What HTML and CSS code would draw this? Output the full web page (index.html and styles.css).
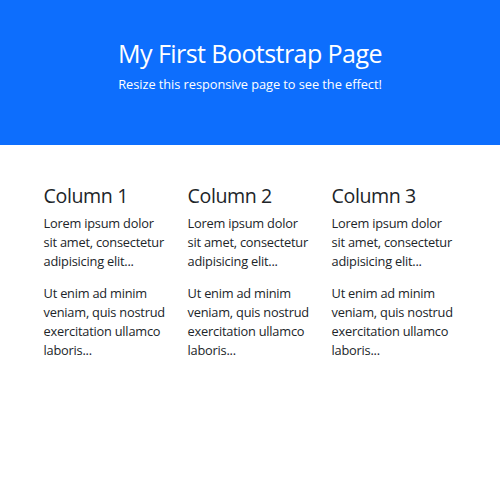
FILE: index.html
```html
<!DOCTYPE html>
<html lang="en">
<head>
<meta charset="utf-8">
<title>Bootstrap Example</title>
<link rel="stylesheet" href="styles.css">
</head>
<body>
<div class="hero">
  <h1 class="hero-title">My First Bootstrap Page</h1>
  <p class="hero-sub">Resize this responsive page to see the effect!</p>
</div>
<div class="container">
  <div class="row">
    <div class="col">
      <h3 class="col-title">Column 1</h3>
      <p class="col-text">Lorem ipsum dolor sit amet, consectetur adipisicing elit...</p>
      <p class="col-text">Ut enim ad minim veniam, quis nostrud exercitation ullamco laboris...</p>
    </div>
    <div class="col">
      <h3 class="col-title">Column 2</h3>
      <p class="col-text">Lorem ipsum dolor sit amet, consectetur adipisicing elit...</p>
      <p class="col-text">Ut enim ad minim veniam, quis nostrud exercitation ullamco laboris...</p>
    </div>
    <div class="col">
      <h3 class="col-title">Column 3</h3>
      <p class="col-text">Lorem ipsum dolor sit amet, consectetur adipisicing elit...</p>
      <p class="col-text">Ut enim ad minim veniam, quis nostrud exercitation ullamco laboris...</p>
    </div>
  </div>
</div>
</body>
</html>
```
FILE: styles.css
```css
* { box-sizing: border-box; }
html, body { margin: 0; padding: 0; }
body {
  font-family: "Segoe UI", "Open Sans", sans-serif;
  font-size: 12.8px;
  line-height: 1.5;
  color: #212529;
  background: #fff;
  letter-spacing: -0.22px;
}
.hero {
  background: #0d6efd;
  color: #fff;
  text-align: center;
  padding: 38.4px;
}
.hero-title {
  margin: 0 0 6.4px;
  font-size: 25.1px;
  font-weight: 400;
  line-height: 1.2;
  letter-spacing: -0.6px;
}
.hero-sub {
  margin: 0 0 12.8px;
  letter-spacing: -0.05px;
}
.container {
  width: 432px;
  margin: 38.4px auto 0;
  padding: 0 9.6px;
}
.row {
  display: flex;
  margin: 0 -9.6px;
}
.col {
  flex: 0 0 33.3333%;
  padding: 0 9.6px;
}
.col-title {
  margin: 0 0 6.4px;
  font-size: 19.6px;
  font-weight: 400;
  line-height: 1.2;
  letter-spacing: -0.4px;
}
.col-text {
  margin: 0 0 12.8px;
}
```
